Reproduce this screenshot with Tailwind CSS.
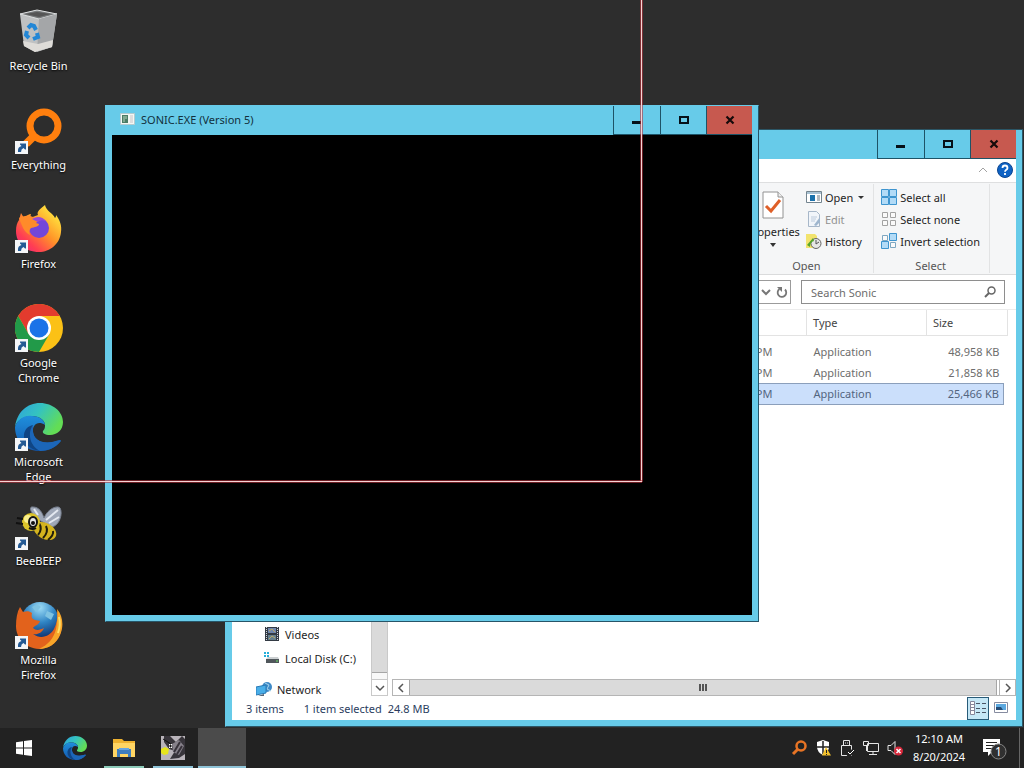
<!DOCTYPE html>
<html lang="en">
<head>
    <meta charset="UTF-8">
    <meta name="viewport" content="width=device-width, initial-scale=1.0">
    <title>Desktop</title>
    <script src="https://cdn.jsdelivr.net/npm/@tailwindcss/browser@4"></script>
</head>
<body class="flex flex-col h-screen overflow-hidden bg-[#2d2d2d] text-[11px] leading-[15px] text-[#1e1e1e] font-['Noto_Sans','Open_Sans',sans-serif]">
    <!-- shared symbols -->
    <svg class="absolute size-0">
        <defs>
            <linearGradient id="edge-top" x1="0" y1="0" x2="1" y2=".5"><stop offset="0" stop-color="#2d9fe0"/><stop offset=".5" stop-color="#34c3c0"/><stop offset="1" stop-color="#63dd55"/></linearGradient>
            <linearGradient id="edge-low" x1="0" y1="0" x2="0" y2="1"><stop offset="0" stop-color="#1f8fdc"/><stop offset="1" stop-color="#1457ac"/></linearGradient>
        </defs>
        <symbol id="shortcut" viewBox="0 0 13 13">
            <rect width="13" height="13" fill="#f4f6f8"/>
            <path d="M3 11V9q0-3 3.500-4L5 3.500V2.500h6v6H10L8.500 7Q6 8 6 11z" fill="#245a94"/>
        </symbol>
        <symbol id="min" viewBox="0 0 12 12"><path d="M1 7h9v3H1z" fill="#061018"/></symbol>
        <symbol id="max" viewBox="0 0 12 12"><path d="M2 3h8v6H2z" fill="none" stroke="#061018" stroke-width="2"/></symbol>
        <symbol id="close" viewBox="0 0 12 12"><path d="M2.500 2.500l7 7M9.500 2.500l-7 7" stroke="#160a0a" stroke-width="2.200"/></symbol>
        <symbol id="edge" viewBox="0 0 48 48">
            <path d="M0 24C2 9 12 0 25 0c13 0 23 9 23 19 0 8-6 13-13 13-5 0-8-2-7-4 2-2 2-4 2-6 0-5-6-9-13-9C9 13 2 17 0 24z" fill="url(#edge-top)"/>
            <path d="M0 24C3 16 9 12 17 13c8 0 13 5 13 9-7-5-13 0-12 7 1 9 11 13 23 9 4-1 6-1 4 1-5 6-12 9-20 9C10 48 0 38 0 24z" fill="url(#edge-low)"/>
            <path d="M18 22c-8 7-5 20 7 26 8 0 16-4 20-9 2-2 0-2-4-1-13 4-22-1-23-9z" fill="#1c66b8"/>
            <path d="M18 22c-6 8-3 21 7 26C14 47 8 39 9 31c1-5 4-8 9-9z" fill="#104584"/>
        </symbol>
    </svg>

    <main class="relative flex-1 min-h-0">
        <!-- desktop shortcuts -->
        <nav class="grid auto-rows-[99px] w-[77px] pt-[7px] text-white text-center [text-shadow:0_1px_2px_#000]">
            <a href="#" class="flex flex-col items-center gap-[3px]">
                <svg class="size-12 shrink-0" viewBox="0 0 48 48">
                    <path d="M5 7l17-4 20 4-5 33-17 5-11-6z" fill="#bfc1c2"/>
                    <path d="M5 7l17-4 20 4-18 5z" fill="#777a7b" stroke="#dcdedf"/>
                    <path d="M10 7l12-2 14 2-12 3z" fill="#555"/>
                    <path d="M24 12l18-5-5 33-15 5z" fill="#a4a6a8"/>
                    <path d="M8 34l15 3 15-4-1 7-17 5-11-6z" fill="#dedcd8"/>
                    <path d="M13 21l3-3 3 1 2 4M22 26l1 4-5 2M14 31l-3-3 1-4" fill="none" stroke="#2387d6" stroke-width="4"/>
                </svg>
                <span>Recycle Bin</span>
            </a>
            <a href="#" class="flex flex-col items-center gap-[3px]">
                <svg class="size-12 shrink-0" viewBox="0 0 48 48">
                    <circle cx="29" cy="20" r="14" fill="none" stroke="#ff7f0e" stroke-width="7"/>
                    <path d="M19 30l-8 8" stroke="#ff7f0e" stroke-width="8"/>
                    <use href="#shortcut" x="0" y="35" width="13" height="13"/>
                </svg>
                <span>Everything</span>
            </a>
            <a href="#" class="flex flex-col items-center gap-[3px]">
                <svg class="size-12 shrink-0" viewBox="0 0 48 48">
                    <defs>
                        <linearGradient id="fox" x1="1" y1="0" x2=".1" y2="1"><stop offset=".15" stop-color="#ffe53e"/><stop offset=".5" stop-color="#ff9428"/><stop offset=".8" stop-color="#ff3c54"/><stop offset="1" stop-color="#e82a80"/></linearGradient>
                    </defs>
                    <path d="M6 8l3 5c3-3 5-4 7-4l-1 4 8-3c-2-3 3-7 7-10 1 6 8 8 10 13 1-1 1-2 1-3 4 5 6 11 5 17-1 12-11 20-22 20C10 47 1 38 1 26c0-5 1-8 3-11z" fill="url(#fox)"/>
                    <circle cx="24" cy="23" r="10" fill="#7446d9"/>
                    <path d="M4 13c5-3 14-4 19 3l-2 2 3 1c0 3-5 3-8 4-2 2-2 4-1 7-6-3-8-9-11-17z" fill="#ff8b2a"/>
                    <path d="M17 14q8-5 14 2-6-2-8 1z" fill="#9a4bd6"/>
                    <use href="#shortcut" x="0" y="35" width="13" height="13"/>
                </svg>
                <span>Firefox</span>
            </a>
            <a href="#" class="flex flex-col items-center gap-[3px]">
                <svg class="size-12 shrink-0" viewBox="0 0 48 48">
                    <circle cx="24" cy="24" r="24" fill="#fbc116"/>
                    <path d="M3.200 12A24 24 0 0 1 44.800 12H24L13.600 30z" fill="#e33b2e"/>
                    <path d="M3.200 12A24 24 0 0 0 24 48l10.400-18H13.600z" fill="#229a49"/>
                    <circle cx="24" cy="24" r="12" fill="#fff"/>
                    <circle cx="24" cy="24" r="9.500" fill="#1b73e8"/>
                    <use href="#shortcut" x="0" y="35" width="13" height="13"/>
                </svg>
                <span>Google<br>Chrome</span>
            </a>
            <a href="#" class="flex flex-col items-center gap-[3px]">
                <svg class="size-12 shrink-0" viewBox="0 0 48 48">
                    <use href="#edge" width="48" height="48"/>
                    <use href="#shortcut" x="0" y="35" width="13" height="13"/>
                </svg>
                <span>Microsoft<br>Edge</span>
            </a>
            <a href="#" class="flex flex-col items-center gap-[3px]">
                <svg class="size-12 shrink-0" viewBox="0 0 48 48">
                    <path d="M24 18C14 10 14 4 18 5c6 0 9 5 11 11C33 6 43 3 45 6c3 5 0 17-8 19z" fill="#9fa8b8" stroke="#757d8c"/>
                    <path d="M31 18L43 8M34 21l10-6M23 13l-4-6" stroke="#e3e8f0" stroke-width="2"/>
                    <ellipse cx="30" cy="29" rx="12" ry="8" transform="rotate(28 30 29)" fill="#d4b41e"/>
                    <path d="M24 21q4 6-1 12M31 24q3 6-3 12M38 29q1 4-5 9" fill="none" stroke="#211e0c" stroke-width="2"/>
                    <circle cx="16" cy="20" r="9" fill="#dcc42a"/>
                    <circle cx="13" cy="17" r="4" fill="#fbf08d"/>
                    <ellipse cx="18" cy="20" rx="4" ry="5" fill="#e8e8e8" stroke="#141414" stroke-width="2"/>
                    <circle cx="18" cy="21" r="2" fill="#111"/>
                    <path d="M8 17l-6-1M8 22l-7-1M14 26q4 2 7 0" fill="none" stroke="#111" stroke-width="2"/>
                    <use href="#shortcut" x="0" y="35" width="13" height="13"/>
                </svg>
                <span>BeeBEEP</span>
            </a>
            <a href="#" class="flex flex-col items-center gap-[3px]">
                <svg class="size-12 shrink-0" viewBox="0 0 48 48">
                    <defs>
                        <radialGradient id="globe" cx=".5" cy=".15" r=".8"><stop offset="0" stop-color="#9cdcf6"/><stop offset=".5" stop-color="#2f84c4"/><stop offset="1" stop-color="#0f3270"/></radialGradient>
                    </defs>
                    <circle cx="25" cy="20" r="19" fill="url(#globe)"/>
                    <path d="M17 6q6-4 9 0l-5 5zM32 10l7 3-3 6-6-4z" fill="#7fc3e2"/>
                    <path d="M42 10c5 7 6 16 3 24-4 9-12 14-21 14C10 47 1 37 1 25 1 18 2 11 5 6l3 5c4-1 6-1 9 1-1 4 0 6 3 7l5 1c-1 4-5 4-7 7 3 3 7 2 11 0-2 5-7 7-11 6 8 6 17 2 21-5 3-6 4-12 3-18z" fill="#e2621c"/>
                    <path d="M42 8c6 7 7 17 3 26-4 9-12 14-21 14 9-4 15-11 17-20 1-7 2-14 1-20z" fill="#f7a62a"/>
                    <path d="M44 16q2 8-1 16" stroke="#ffe069" stroke-width="2" fill="none"/>
                    <use href="#shortcut" x="0" y="35" width="13" height="13"/>
                </svg>
                <span>Mozilla<br>Firefox</span>
            </a>
        </nav>

        <!-- file explorer window -->
        <section class="absolute left-[225px] right-[1px] top-[129px] bottom-[1px] flex flex-col bg-[#67cbe9] border border-[#2b5666] border-l-[#67cbe9] px-1.5 pb-1.5">
            <header class="flex h-[29px] shrink-0 justify-end">
                <button aria-label="Minimize" class="flex w-[47px] items-center justify-center border-l border-b border-[#1d5367]"><svg class="size-3"><use href="#min"/></svg></button>
                <button aria-label="Maximize" class="flex w-[46px] items-center justify-center border-l border-b border-[#1d5367]"><svg class="size-3"><use href="#max"/></svg></button>
                <button aria-label="Close" class="flex w-[46px] items-center justify-center border-l border-b border-[#1d5367] bg-[#c7594f]"><svg class="size-3"><use href="#close"/></svg></button>
            </header>
            <div class="flex min-h-0 flex-1 flex-col bg-white">
                <div class="flex h-6 shrink-0 items-center justify-end gap-2 border-b border-[#dedfe0] pr-[3px] pb-0.5">
                    <button aria-label="Collapse ribbon"><svg class="size-3" viewBox="0 0 12 12"><path d="M2 8l4-4 4 4" fill="none" stroke="#a2a2a2"/></svg></button>
                    <button aria-label="Help"><svg class="size-4" viewBox="0 0 16 16"><circle cx="8" cy="8" r="7.500" fill="#0e62c4" stroke="#0c4590"/><path d="M5.500 6q0-2.500 2.500-2.500T10.500 6q0 1-1.200 1.800T8 9.800M8 11v2" fill="none" stroke="#fff" stroke-width="1.800"/></svg></button>
                </div>
                <!-- ribbon -->
                <div class="flex h-[92px] shrink-0 justify-end border-b border-[#dadbdc] bg-[#f5f6f7] pr-[26px]">
                    <div class="my-px flex flex-col items-center border-r border-[#e2e3e4] pr-[9px]">
                        <div class="flex flex-1 gap-1.5">
                            <button class="flex flex-col items-center pt-1.5">
                                <svg class="h-8 w-6" viewBox="0 0 24 32"><path d="M2 2h15l5 5v21H2z" fill="#fff" stroke="#929292"/><path d="M17 2v5h5" fill="#eee" stroke="#929292"/><path d="M5 16l5 5 9-11" fill="none" stroke="#df5f28" stroke-width="3"/></svg>
                                <span class="mt-0.5">Properties</span>
                                <svg class="mt-1 h-1 w-1.5" viewBox="0 0 6 4"><path d="M0 0h6L3 4z" fill="#333"/></svg>
                            </button>
                            <div class="flex flex-col pt-0.5">
                                <button class="flex h-[22px] items-center gap-[3px]">
                                    <svg class="h-4 w-4" viewBox="0 0 16 16"><path d="M.500 2.500h15v11H.500z" fill="#fff" stroke="#73848f"/><path d="M1 3h14v2H1z" fill="#a9c3d4"/><path d="M4 6h5v6H4z" fill="#1c72ac"/><path d="M11 7h3M11 9h3M11 11h3" stroke="#697680"/></svg>
                                    <span>Open</span>
                                    <svg class="ml-0.5 h-[3px] w-1.5" viewBox="0 0 6 3"><path d="M0 0h6L3 3z" fill="#333"/></svg>
                                </button>
                                <button class="flex h-[22px] items-center gap-[3px] text-[#919191]">
                                    <svg class="h-4 w-4" viewBox="0 0 16 16"><path d="M2.500.500h8l3 3v12h-11z" fill="#f1f5fa" stroke="#a7b7c9"/><path d="M5 6h6M5 8h5M5 10h4" stroke="#bdcbdc"/><path d="M8 14l6-8v5l-4 4z" fill="#9fb6ce"/></svg>
                                    <span>Edit</span>
                                </button>
                                <button class="flex h-[22px] items-center gap-[3px]">
                                    <svg class="h-4 w-4" viewBox="0 0 16 16"><path d="M0 1h9l2 2v12H0z" fill="#f2e36d"/><circle cx="10" cy="10.500" r="5" fill="#e6e6e6" stroke="#666"/><path d="M10 7v4l3-2" fill="none" stroke="#555"/><path d="M1 12l6-7 1 3q-4 1-4 6z" fill="#55a52c"/></svg>
                                    <span>History</span>
                                </button>
                            </div>
                        </div>
                        <span class="self-center pl-0.5 text-[#555]">Open</span>
                    </div>
                    <div class="my-px flex flex-col items-center border-r border-[#e2e3e4] pl-[7px] pr-[9px]">
                        <div class="flex flex-1 flex-col pt-0.5">
                            <button class="flex h-[22px] items-center gap-[3px]">
                                <svg class="size-4" viewBox="0 0 16 16"><path d="M.500.500h7v7h-7zM8.500.500h7v7h-7zM.500 8.500h7v7h-7zM8.500 8.500h7v7h-7z" fill="#b2dbf7" stroke="#3e95cf"/></svg>
                                <span>Select all</span>
                            </button>
                            <button class="flex h-[22px] items-center gap-[3px]">
                                <svg class="size-4" viewBox="0 0 16 16"><path d="M1.500 1.500h5v5h-5zM9.500 1.500h5v5h-5zM1.500 9.500h5v5h-5zM9.500 9.500h5v5h-5z" fill="#fafafa" stroke="#a2a2a2"/></svg>
                                <span>Select none</span>
                            </button>
                            <button class="flex h-[22px] items-center gap-[3px]">
                                <svg class="size-4" viewBox="0 0 16 16"><path d="M1.500 2.500h5v5h-5zM9.500 9.500h5v5h-5z" fill="#fafafa" stroke="#7da7c2"/><path d="M8.500.500h7v7h-7zM.500 8.500h7v7h-7z" fill="#b2dbf7" stroke="#3e95cf"/></svg>
                                <span>Invert selection</span>
                            </button>
                        </div>
                        <span class="text-[#555]">Select</span>
                    </div>
                </div>
                <!-- address and search -->
                <div class="flex h-[34px] shrink-0 items-center justify-end gap-2.5 pr-[11px]">
                    <div class="flex h-6 flex-1 items-center justify-end gap-1 border border-[#9b9b9b] pr-0.5">
                        <button aria-label="Previous locations"><svg class="size-3" viewBox="0 0 12 12"><path d="M2 4l4 4 4-4" fill="none" stroke="#777" stroke-width="2"/></svg></button>
                        <button aria-label="Refresh"><svg class="size-3" viewBox="0 0 12 12"><path d="M3.500 3a4.300 4.300 0 1 0 5.500 0.500" fill="none" stroke="#777" stroke-width="1.800"/><path d="M1 1h5v5z" fill="#777"/></svg></button>
                    </div>
                    <form class="flex h-6 w-[204px] items-center border border-[#8e8e8e] pl-[9px] pr-2">
                        <input type="text" aria-label="Search Sonic" placeholder="Search Sonic" class="min-w-0 flex-1 outline-none placeholder:text-[#6d6d6d]">
                        <svg class="size-3" viewBox="0 0 12 12"><circle cx="7.500" cy="4.500" r="3.500" fill="none" stroke="#666" stroke-width="1.500"/><path d="M5 7l-4 4" stroke="#666" stroke-width="2"/></svg>
                    </form>
                </div>
                <div class="flex min-h-0 flex-1">
                    <!-- navigation pane -->
                    <aside class="flex w-[156px] shrink-0">
                        <div class="flex flex-1 flex-col justify-end">
                            <a href="#" class="flex h-6 items-center gap-[5px] pl-8">
                                <svg class="size-4" viewBox="0 0 16 16"><path d="M1 1h14v14H1z" fill="#333a44"/><path d="M4 2h8v5H4z" fill="#7187ad"/><path d="M4 9h8v5H4z" fill="#66808e"/><path d="M2.500 1v14M13.500 1v14" stroke="#d4d8df" stroke-dasharray="1 1"/><path d="M5 5l3-2 3 3M5 13l3-3 3 2" stroke="#bba969" fill="none"/></svg>
                                <span>Videos</span>
                            </a>
                            <a href="#" class="flex h-6 items-center gap-[5px] pl-8">
                                <svg class="size-4" viewBox="0 0 16 16"><path d="M0 2h2v2H0zM3 2h2v2H3zM0 5h2v2H0zM3 5h2v2H3z" fill="#25aed8"/><path d="M2 9l2-2h10l1 2z" fill="#ccd0d2"/><path d="M2 9h13v4H2z" fill="#50575b"/><path d="M12 11h2" stroke="#68e063"/></svg>
                                <span>Local Disk (C:)</span>
                            </a>
                            <a href="#" class="mt-3 flex h-3.5 items-center gap-[5px] pl-6">
                                <svg class="size-4" viewBox="0 0 16 16"><circle cx="11" cy="6" r="5" fill="#3f8ac7"/><path d="M9 2l4 2-2 4 4 2" stroke="#a4d3ed" fill="none"/><path d="M0 6l10-2v8l-10 2z" fill="#49aee8" stroke="#2878b5"/><path d="M2 15l6-2v2z" fill="#567"/></svg>
                                <span>Network</span>
                            </a>
                        </div>
                        <div class="flex w-[17px] flex-col border-x border-[#c9c9c9] bg-[#f8f8f8]">
                            <div class="flex-1 border-b border-[#a6a6a6] bg-[#dadada]"></div>
                            <button aria-label="Scroll down" class="mt-1.5 flex h-[17px] items-center justify-center border-y border-[#c9c9c9] bg-white"><svg class="size-2.5" viewBox="0 0 10 10"><path d="M1 3l4 4 4-4" fill="none" stroke="#555" stroke-width="1.500"/></svg></button>
                        </div>
                    </aside>
                    <!-- file list -->
                    <div class="flex min-w-0 flex-1 flex-col pl-1">
                        <div class="flex-1 border-t border-[#ececec] pr-2">
                            <table class="w-full table-fixed text-[#6d6d6d]">
                                <colgroup><col><col class="w-[120px]"><col class="w-[77px]"><col class="w-[4px]"></colgroup>
                                <thead>
                                    <tr class="h-[25px] border-b border-[#e3e3e3] text-left text-[#444]">
                                        <th class="font-normal"></th>
                                        <th class="border-l border-[#e3e3e3] pl-1.5 font-normal">Type</th>
                                        <th colspan="2" class="border-x border-[#e3e3e3] pl-1.5 font-normal">Size</th>
                                    </tr>
                                </thead>
                                <tbody>
                                    <tr class="h-1.5"><td colspan="4"></td></tr>
                                    <tr class="h-[21px]"><td class="pr-[34px] text-right">PM</td><td class="pl-[7px]">Application</td><td class="pr-1 text-right">48,958 KB</td></tr>
                                    <tr class="h-[21px]"><td class="pr-[34px] text-right">PM</td><td class="pl-[7px]">Application</td><td class="pr-1 text-right">21,858 KB</td></tr>
                                    <tr class="h-[21px] text-[#53657f]"><td class="border-y border-[#8b9fbb] bg-[#cbdffb] pr-[34px] text-right">PM</td><td class="border-y border-[#8b9fbb] bg-[#cbdffb] pl-[7px]">Application</td><td class="border-y border-r border-[#8b9fbb] bg-[#cbdffb] pr-1 text-right">25,466 KB</td></tr>
                                </tbody>
                            </table>
                        </div>
                        <div class="flex h-[17px] border border-[#b5b5b5] bg-white">
                            <button aria-label="Scroll left" class="flex w-4 items-center justify-center"><svg class="size-2.5" viewBox="0 0 10 10"><path d="M7 1L3 5l4 4" fill="none" stroke="#555" stroke-width="1.500"/></svg></button>
                            <div class="flex flex-1 items-center justify-center border-x border-[#a6a6a6] bg-[#dadada]"><svg class="h-[7px] w-2" viewBox="0 0 8 7"><path d="M1 0v7M4 0v7M7 0v7" stroke="#555" stroke-width="2"/></svg></div>
                            <button aria-label="Scroll right" class="ml-0.5 flex w-4 items-center justify-center border-l border-[#b5b5b5]"><svg class="size-2.5" viewBox="0 0 10 10"><path d="M3 1l4 4-4 4" fill="none" stroke="#555" stroke-width="1.500"/></svg></button>
                        </div>
                    </div>
                </div>
                <!-- status bar -->
                <footer class="flex h-6 shrink-0 items-center pl-3.5 pr-[3px] text-[#2b3d5e]">
                    <span>3 items</span>
                    <span class="ml-5">1 item selected</span>
                    <span class="ml-1.5 flex-1">24.8 MB</span>
                    <button aria-label="Details view" class="flex h-[23px] w-[22px] items-center justify-center border border-[#285b78] bg-[#c5e7f6]"><svg class="size-4" viewBox="0 0 16 16"><path d="M.500 1.500h4v13h-4zM.500 4.500h4M.500 7.500h4M.500 10.500h4" fill="#fff" stroke="#87869a"/><path d="M6 3.500h4M12 3.500h4M6 8.500h4M12 8.500h4M6 12.500h4M12 12.500h4" stroke="#4a5465"/></svg></button>
                    <button aria-label="Thumbnail view" class="flex w-6 items-center justify-center"><svg class="h-3 w-3.5" viewBox="0 0 14 12"><path d="M.500.500h13v10H.500z" fill="#fff" stroke="#868ca0"/><path d="M2 2h10v6H2z" fill="#5ba8df"/><path d="M2 5h5l2 3H2z" fill="#244c76"/></svg></button>
                </footer>
            </div>
        </section>

        <!-- game window -->
        <section class="absolute left-[105px] top-[105px] flex h-[517px] w-[654px] flex-col border border-t-[#67cbe9] border-l-[#67cbe9] border-r-[#275568] border-b-[#275568] bg-[#67cbe9] px-1.5 pb-1.5">
            <header class="flex h-[29px] shrink-0">
                <h1 class="flex flex-1 items-center gap-1.5 pl-2 pb-[3px] text-[#12303c]">
                    <svg class="h-3 w-[15px]" viewBox="0 0 15 12"><path d="M.500.500h14v11H.500z" fill="#f3f7f4" stroke="#b4cbcf"/><path d="M2 2h6v8H2z" fill="#4b7d66"/><path d="M4 3v6M6 3v3" stroke="#b9d4b9"/><path d="M10 2h3v8h-3z" fill="#ddd"/></svg>
                    SONIC.EXE (Version 5)
                </h1>
                <button aria-label="Minimize" class="flex w-[47px] items-center justify-center border-l border-b border-[#1d5367]"><svg class="size-3"><use href="#min"/></svg></button>
                <button aria-label="Maximize" class="flex w-[46px] items-center justify-center border-l border-b border-[#1d5367]"><svg class="size-3"><use href="#max"/></svg></button>
                <button aria-label="Close" class="flex w-[46px] items-center justify-center border-l border-b border-[#1d5367] bg-[#c7594f]"><svg class="size-3"><use href="#close"/></svg></button>
            </header>
            <div class="flex-1 bg-black"></div>
        </section>

        <!-- crosshair -->
        <div class="pointer-events-none absolute left-0 top-0 h-[483px] w-[643px]">
            <div class="absolute right-0 top-0 h-[482px] w-[3px] border-x border-[#b8323c]/60 bg-[#f6d5d6] bg-clip-padding"></div>
            <div class="absolute bottom-0 left-0 h-[3px] w-[642px] border-y border-[#b8323c]/60 bg-[#f6d5d6] bg-clip-padding"></div>
        </div>
    </main>

    <!-- taskbar -->
    <footer class="flex h-10 shrink-0 bg-[#222] text-white">
        <button aria-label="Start" class="flex w-[50px] items-center justify-center pr-0.5">
            <svg class="size-4" viewBox="0 0 16 16"><path d="M0 2.300L7 1.300V7.500H0zM8 1.100L16 0v7.500H8zM0 8.500h7v6.200L0 13.700zM8 8.500h8V16l-8-1.100z" fill="#fff"/></svg>
        </button>
        <button aria-label="Microsoft Edge" class="flex w-[49px] items-center justify-center"><svg class="size-6"><use href="#edge"/></svg></button>
        <button aria-label="File Explorer" class="flex w-[49px] flex-col items-center justify-between pt-2">
            <svg class="size-6" viewBox="0 0 24 24"><path d="M1 3h9l2 2h11v16H1z" fill="#eeb230"/><path d="M1 7h22v14H1z" fill="#ffd563"/><path d="M5 13h14v8h-3v-3H8v3H5z" fill="#3e7dbd"/><path d="M7 13h10" stroke="#69a5df" stroke-width="2"/></svg>
            <span class="h-0.5 w-10 bg-[#8dcbb9]"></span>
        </button>
        <button aria-label="Sonic" class="flex w-[49px] flex-col items-center justify-between pt-2">
            <svg class="size-6" viewBox="0 0 24 24"><path d="M0 0h24v24H0z" fill="#b9b4ba"/><path d="M3 0h6l6 6 6-6 3 3v15l-6 4-9 1 5-8-6-2-5-7z" fill="#38353b"/><path d="M11 8l7-4 5 6-5 9-6-3z" fill="#86818a"/><path d="M13 16l6-10M16 18l5-8" stroke="#37323a" stroke-width="2"/><path d="M0 13l4-2 4 2-1 5-4 1-3-2z" fill="#e7e51c"/><path d="M8 8h3v4H8z" fill="#fff"/><path d="M9 9h1v2H9zM2 3l8 5" stroke="#111" fill="#111"/></svg>
            <span class="h-0.5 w-10 bg-[#8fc4d8]"></span>
        </button>
        <button aria-label="SONIC.EXE (Version 5)" class="ml-px flex w-12 items-end bg-[#4b4b4b]"><span class="h-0.5 w-full bg-[#8fc4d8]"></span></button>
        <div class="flex flex-1 items-center justify-end gap-2 pr-1">
            <svg class="size-4" viewBox="0 0 16 16"><circle cx="10" cy="6" r="4.500" fill="none" stroke="#e77425" stroke-width="2.500"/><path d="M7 9l-5 5" stroke="#e77425" stroke-width="3"/></svg>
            <svg class="size-4" viewBox="0 0 16 16"><path d="M8 0l6 2v5q0 5-6 8-6-3-6-8V2z" fill="#fff"/><path d="M8 1v13M2 7h12" stroke="#222" stroke-width="1.500"/><path d="M11 7l5 8.500H7z" fill="#f4c22c"/><path d="M11.500 10v3M11.500 14v1" stroke="#222"/></svg>
            <svg class="size-4" viewBox="0 0 16 16"><path d="M4.500.500h6v5h-6zM2.500 5.500h10v10h-10z" fill="none" stroke="#e5e5e5"/><path d="M6 3h1M8 3h1" stroke="#e5e5e5"/><path d="M8 12l2 3 5-5" fill="none" stroke="#222" stroke-width="4"/><path d="M9 12l2 2 4-4" fill="none" stroke="#fff"/></svg>
            <svg class="size-4" viewBox="0 0 16 16"><path d="M4.500 3.500h11v8h-11zM10 12v3M6 14.500h8M.500 1.500h5v4h-5zM3.500 6v5" fill="#222" stroke="#e5e5e5"/></svg>
            <svg class="size-4" viewBox="0 0 16 16"><path d="M1 5.500h3l4-4v13l-4-4H1z" fill="none" stroke="#e5e5e5"/><circle cx="11.500" cy="11" r="4.500" fill="#d8283b"/><path d="M9.500 9l4 4M13.500 9l-4 4" stroke="#fff" stroke-width="1.500"/></svg>
            <time class="w-[56px] text-center leading-[18px]" datetime="2024-08-20T00:10">12:10 AM<br>8/20/2024</time>
            <button aria-label="Notifications" class="ml-2"><svg class="size-6" viewBox="0 0 24 24"><path d="M0 3h17v13H9l-4 4v-4H0z" fill="#fff"/><path d="M3 6.500h11M3 9.500h11M3 12.500h7" stroke="#222"/><circle cx="15.500" cy="15.500" r="7.500" fill="#303030" stroke="#858585"/><text x="15.500" y="20" text-anchor="middle" font-size="12" fill="#fff">1</text></svg></button>
            <span class="ml-1 h-full w-px bg-[#666]"></span>
        </div>
    </footer>
</body>
</html>
